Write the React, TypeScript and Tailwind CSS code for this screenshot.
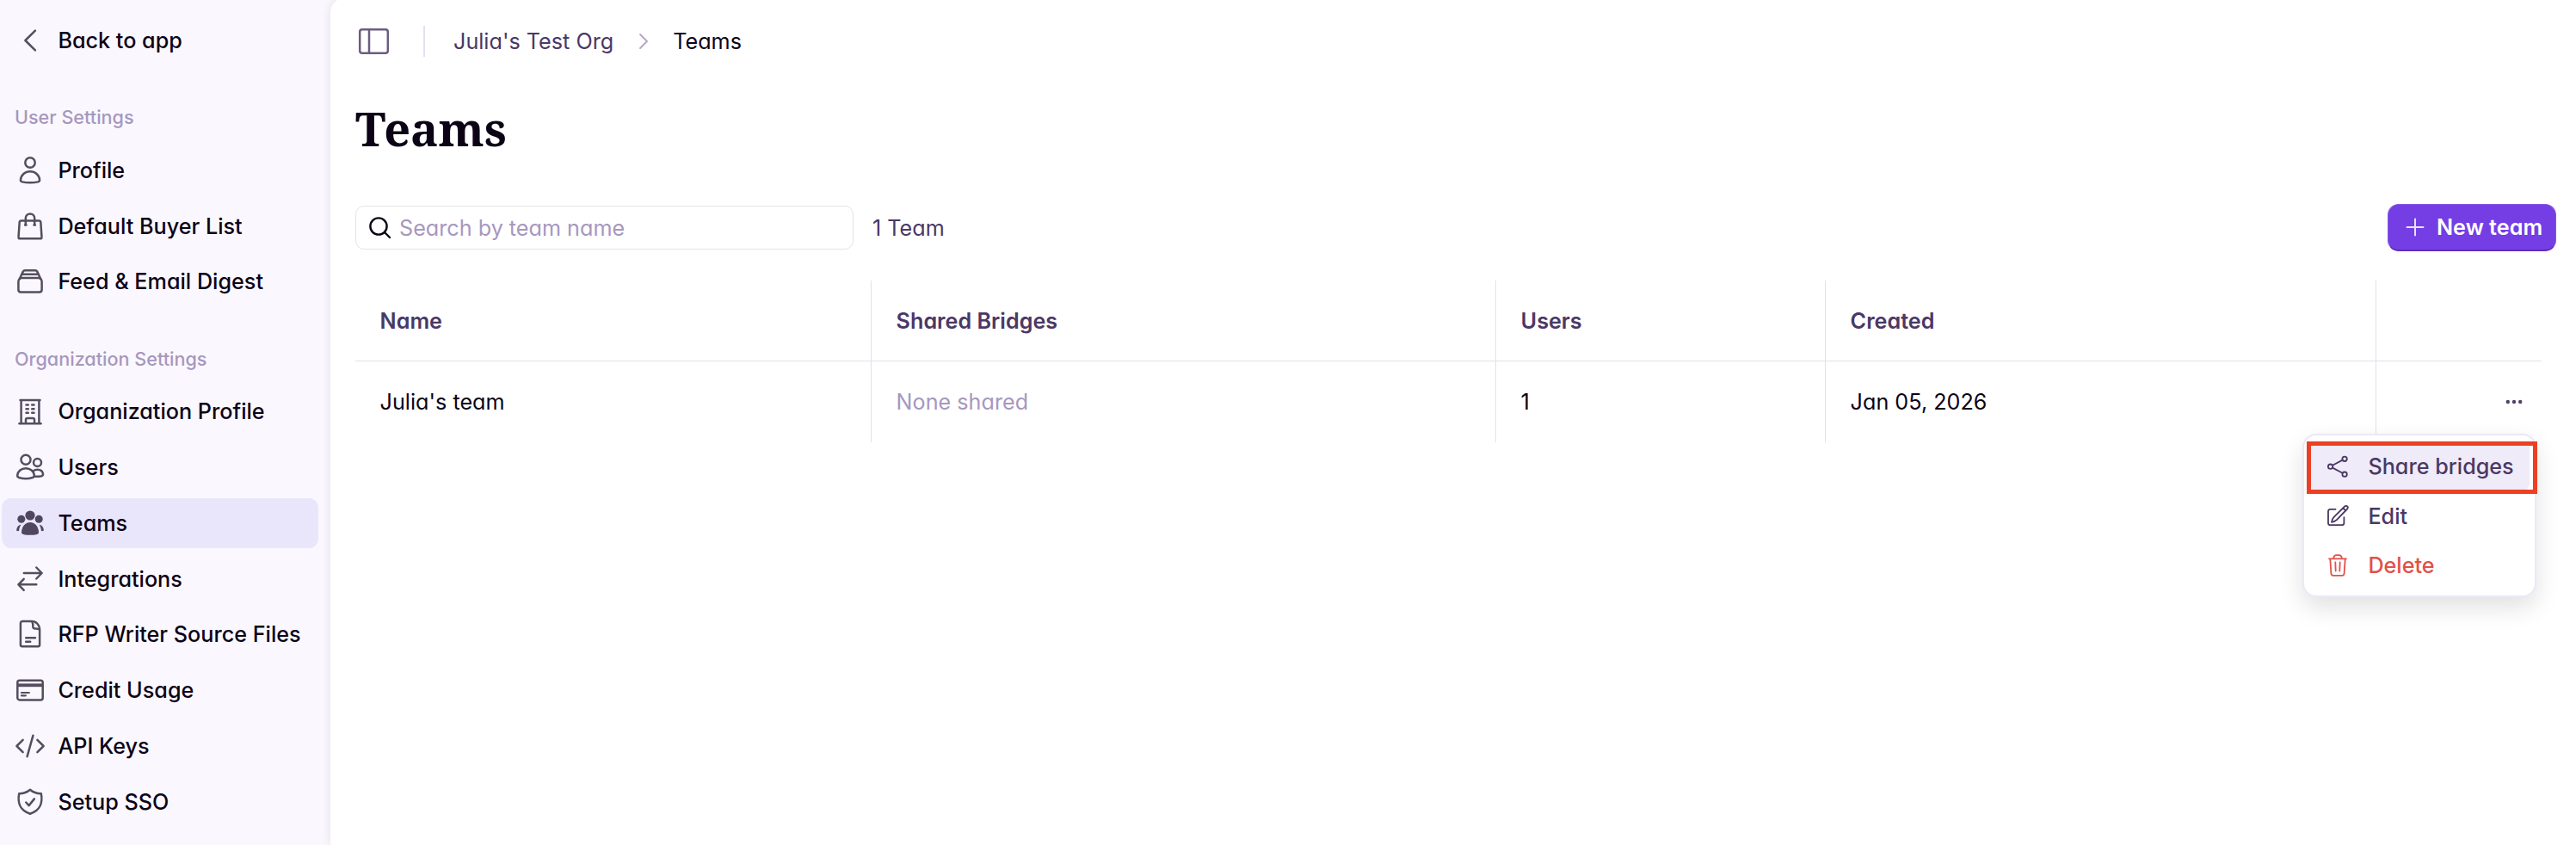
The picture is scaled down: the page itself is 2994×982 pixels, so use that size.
import React from "react";

type Glyph = React.ReactNode;

function Icon({ children, color = "#544e60", width = 2.5 }: { children: Glyph; color?: string; width?: number }) {
  return (
    <svg
      width="40"
      height="40"
      viewBox="0 0 40 40"
      fill="none"
      stroke={color}
      strokeWidth={width}
      strokeLinecap="round"
      strokeLinejoin="round"
      className="shrink-0"
    >
      {children}
    </svg>
  );
}

const glyphs: Record<string, Glyph> = {
  back: <path d="M25.9 8.600 14.4 20l11.5 11.400" />,
  profile: (
    <>
      <circle cx="20" cy="11" r="5.700" />
      <path d="M8.900 31C9.500 25.300 14 21.200 20 21.200S30.500 25.300 31.100 31c.2 1.400-.6 2-2 2.400-2.600.6-5.800.9-9.100.9s-6.500-.3-9.100-.9c-1.400-.4-2.200-1-2-2.400z" />
    </>
  ),
  bag: (
    <>
      <path d="M9.300 13.500h21.400c.9 0 1.500.6 1.600 1.500l1.200 17.700c.1.900-.5 1.600-1.400 1.600H7.900c-.9 0-1.500-.7-1.400-1.600L7.700 15c.1-.9.700-1.500 1.600-1.500z" />
      <path d="M14.800 18.200v-7.600a5.200 5.200 0 0 1 10.400 0v7.600M14.100 18.400h1.400M24.500 18.400h1.400" />
    </>
  ),
  stack: (
    <>
      <path d="M10.500 16h19c2.400 0 4.100 2 4.100 4.400v9.400c0 1.700-1.200 2.700-2.800 2.700H9.200c-1.600 0-2.800-1-2.800-2.700v-9.400C6.400 18 8.100 16 10.500 16z" />
      <path d="M7.600 17.500l4-8.600c.6-1.200 1.200-1.700 2.400-1.700h12c1.200 0 1.800.5 2.400 1.700l4 8.600M10.800 11.700h18.400" />
    </>
  ),
  building: (
    <>
      <path d="M7.400 34.300h25.200M8.500 7h23M9.600 7v27M30.400 7v27M15 34v-4.200c0-1.100.8-1.800 1.800-1.800h6.400c1 0 1.800.7 1.800 1.800V34" />
      <path d="M15.500 12.600h2.300M22.200 12.600h2.300M15.500 17.200h2.300M22.200 17.200h2.300M15.500 21.700h2.300M22.200 21.700h2.300" />
    </>
  ),
  users: (
    <>
      <circle cx="15" cy="11.300" r="5.500" />
      <circle cx="28.500" cy="14.500" r="4.500" />
      <path d="M5.200 29.500c.5-4.800 4.500-8.300 9.800-8.300s9.300 3.500 9.800 8.300c.1 1.300-.6 2-1.900 2.500-4.700 1.500-11.100 1.500-15.800 0-1.300-.5-2-1.200-1.900-2.500z" />
      <path d="M23.500 24.500c1.500-1.300 3.200-1.800 5-1.800 3.700 0 6.100 2.300 6.500 5.300.2 1.300-.5 1.900-1.700 2.200-2.700.6-5.600.8-8.300.5" />
    </>
  ),
  teams: (
    <g fill="#51465f" stroke="none">
      <circle cx="20" cy="11" r="5.600" />
      <circle cx="9.800" cy="15.200" r="4.500" />
      <circle cx="30.200" cy="15.200" r="4.500" />
      <path d="M10 31c0-6.500 4.200-12 10-12s10 5.500 10 12c0 2-4.200 2.800-10 2.800S10 33 10 31z" />
      <path d="M4.200 28.300c0-3.200 1.700-5.800 5.200-6.500-1.500 2.200-2.200 4.400-2.300 7.300-1.800.2-2.900.1-2.900-.8zM35.800 28.300c0-3.200-1.700-5.800-5.200-6.500 1.500 2.200 2.200 4.400 2.300 7.300 1.800.2 2.900.1 2.900-.8z" />
    </g>
  ),
  swap: <path d="M12.800 13h20.800M27.300 6.500l6.300 6.500-6.300 6.500M27.300 26.300H6.400M12.700 19.800l-6.300 6.500 6.300 6.500" />,
  file: (
    <>
      <path d="M11.200 5.100h10.300C27.500 5.100 31.100 9.400 31.100 15.300v17c0 1.200-.8 2-2 2H10.900c-1.200 0-2-.8-2-2V7.300c0-1.300 1-2.200 2.300-2.200z" />
      <path d="M22.300 5.600c1 1.500 1.200 3.300 1 5.500-.1 1.600.8 2.400 2.300 2.400 2.200-.1 4 0 5.300 1.200M15.200 24.300h10.800M15.200 28.700h5" />
    </>
  ),
  card: (
    <>
      <rect x="5.300" y="8.700" width="29.400" height="22.700" rx="2.500" />
      <path d="M5.200 14.300h29.600" strokeWidth="3.800" strokeLinecap="butt" />
      <path d="M9.900 23h8.900M9.900 26.300h5" strokeWidth="2.200" />
    </>
  ),
  code: <path d="M11.600 12.800 4.400 20l7.200 7.200M28.400 12.800l7.200 7.200-7.200 7.200M23.400 7.800 16.600 32.200" />,
  shield: (
    <>
      <path d="M20 5.700c3.300 2.900 8 4.400 12.800 4.600 2 10.300-1 19.700-12.800 23.400C8.200 30 5.200 20.600 7.200 10.300 12 10.100 16.700 8.600 20 5.700z" />
      <path d="M15.300 20.500l3.300 3.600 6.300-7.700" />
    </>
  ),
};

function NavItem({ icon, label, active = false }: { icon: string; label: string; active?: boolean }) {
  return (
    <a
      className={
        active
          ? "flex h-[57.6px] items-center gap-[12.400px] rounded-[11px] bg-[#e9e6fc] pl-[13px]"
          : "flex h-[57.6px] items-center gap-[12.400px] rounded-[11px] pl-[13px]"
      }
    >
      <Icon>{glyphs[icon]}</Icon>
      <span>{label}</span>
    </a>
  );
}

function NavLabel({ children }: { children: string }) {
  return <div className="mt-[40.8px] flex h-[40px] items-center pl-[15px] text-[21.6px] text-[#a797be]">{children}</div>;
}

const userItems = [
  ["profile", "Profile"],
  ["bag", "Default Buyer List"],
  ["stack", "Feed & Email Digest"],
];

const orgItems = [
  ["building", "Organization Profile"],
  ["users", "Users"],
  ["teams", "Teams"],
  ["swap", "Integrations"],
  ["file", "RFP Writer Source Files"],
  ["card", "Credit Usage"],
  ["code", "API Keys"],
  ["shield", "Setup SSO"],
];

function Sidebar() {
  return (
    <nav className="flex w-[384px] shrink-0 flex-col pt-[18px] pr-[14px] pl-[2px] font-medium whitespace-nowrap text-[#0d0317]">
      <NavItem icon="back" label="Back to app" />
      <NavLabel>User Settings</NavLabel>
      <div className="mt-[12.6px] flex flex-col gap-[7.2px]">
        {userItems.map(([icon, label]) => (
          <NavItem key={label} icon={icon} label={label} />
        ))}
      </div>
      <NavLabel>Organization Settings</NavLabel>
      <div className="mt-[12.6px] flex flex-col gap-[7.2px]">
        {orgItems.map(([icon, label]) => (
          <NavItem key={label} icon={icon} label={label} active={label === "Teams"} />
        ))}
      </div>
    </nav>
  );
}

function Header() {
  return (
    <header className="flex h-[96px] items-center pl-[29px]">
      <Icon color="#6c5d80">
        <rect x="5.200" y="6.200" width="32.600" height="27.600" rx="2.800" />
        <path d="M16 6.500v27" />
      </Icon>
      <div className="ml-[39px] h-[36px] w-[2px] bg-[#e5dff0]" />
      <span className="ml-[33px] text-[#4b3865]">Julia's Test Org</span>
      <svg
        width="12"
        height="20"
        viewBox="0 0 12 20"
        fill="none"
        stroke="#b3a4ca"
        strokeWidth="1.800"
        strokeLinecap="round"
        strokeLinejoin="round"
        className="ml-[29px]"
      >
        <path d="M2 2l8 8-8 8" />
      </svg>
      <span className="ml-[28px] text-[#0d0317]">Teams</span>
    </header>
  );
}

function Toolbar() {
  return (
    <div className="mt-[51px] flex h-[55px] items-center">
      <label className="flex h-[51px] w-[579px] items-center rounded-[10px] border border-[#e4e4e6] pl-[14px]">
        <svg
          width="28"
          height="28"
          viewBox="0 0 28 28"
          fill="none"
          stroke="#0d0317"
          strokeWidth="2.400"
          strokeLinecap="round"
          className="shrink-0"
        >
          <circle cx="12" cy="12" r="9.600" />
          <path d="M19 19l6 6" />
        </svg>
        <span className="ml-[8px] text-[#a797be]">Search by team name</span>
      </label>
      <span className="ml-[22px] text-[#4b3865]">1 Team</span>
      <button className="ml-auto flex h-[55px] w-[196px] items-center rounded-[13px] border border-b-2 border-[#8656e8] border-b-[#5c2fb8] bg-[#743ee4] pl-[19px] font-semibold whitespace-nowrap text-white">
        <svg width="24" height="24" viewBox="0 0 24 24" stroke="#e9dffb" strokeWidth="2" strokeLinecap="round" className="shrink-0">
          <path d="M12 2.500v19M2.500 12h19" />
        </svg>
        <span className="ml-[13px]">New team</span>
      </button>
    </div>
  );
}

const headings = ["Name", "Shared Bridges", "Users", "Created", ""];

function TeamsTable() {
  return (
    <div className="mt-[34px] w-[2541px]">
      <div className="grid h-[94px] grid-cols-[600px_726px_383px_640px_192px] border-b border-[#e3e0ea] font-semibold text-[#4b3865]">
        {headings.map((h, i) => (
          <div key={i} className="flex items-center border-r border-[#e3e0ea] pl-[28.600px] last:border-r-0">
            {h}
          </div>
        ))}
      </div>
      <div className="grid h-[94px] grid-cols-[600px_726px_383px_640px_192px] text-[#0d0317]">
        <div className="flex items-center border-r border-[#e3e0ea] pl-[28.600px]">Julia's team</div>
        <div className="flex items-center border-r border-[#e3e0ea] pl-[28.600px] text-[#a797be]">None shared</div>
        <div className="flex items-center border-r border-[#e3e0ea] pl-[28.600px]">1</div>
        <div className="flex items-center border-r border-[#e3e0ea] pl-[28.600px]">Jan 05, 2026</div>
        <div className="flex items-center justify-end pr-[20px]">
          <svg width="24" height="8" viewBox="0 0 24 8" fill="#51406a">
            <circle cx="4.800" cy="4" r="2.200" />
            <circle cx="12" cy="4" r="2.200" />
            <circle cx="19.200" cy="4" r="2.200" />
          </svg>
        </div>
      </div>
    </div>
  );
}

function RowMenu() {
  return (
    <div className="absolute top-[504px] left-[2676px] h-[190px] w-[272px] rounded-[16px] border-2 border-[#ebe8f6] bg-white pt-[7.500px] pr-[6px] pl-[6px] font-medium whitespace-nowrap text-[#4b3865] shadow-[0_12px_28px_rgba(0,0,0,0.12)]">
      <div className="flex h-[57px] items-center rounded-[9px] bg-[#efebf8] pl-[13px]">
        <Icon color="#4b3865" width={1.8}>
          <circle cx="11.600" cy="20.200" r="2.700" />
          <circle cx="28.100" cy="11.300" r="2.700" />
          <circle cx="28.100" cy="29.200" r="2.700" />
          <path d="M14.100 18.800l11.500-6.200M14.100 21.600l11.500 6.200" />
        </Icon>
        <span className="ml-[15.400px]">Share bridges</span>
      </div>
      <div className="flex h-[58px] items-center pl-[13px]">
        <Icon color="#4b3865" width={1.8}>
          <path d="M17.500 11.800h-6c-1.500 0-2.500 1-2.500 2.500v13.400c0 1.500 1 2.500 2.500 2.500h13.400c1.500 0 2.500-1 2.500-2.500v-6.500" />
          <path d="M13 26.800c.3-2.300 1-4.300 2.600-6L28.200 8.500c1-.9 2.200-.9 3 0 .8.8.8 2-.1 3L18.900 24.100c-1.600 1.600-3.600 2.400-5.900 2.700zM26.200 10.500l3 3" />
        </Icon>
        <span className="ml-[15.400px]">Edit</span>
      </div>
      <div className="flex h-[57px] items-center pl-[13px] text-[#e2504a]">
        <Icon color="#e2504a" width={1.8}>
          <path d="M10 12.300h20M11.300 12.500l1.100 17c.1 1.500 1 2.300 2.400 2.300h10.400c1.400 0 2.300-.8 2.400-2.300l1.100-17M15.200 12c.2-2.700 1.600-3.800 3.500-3.800h2.600c1.900 0 3.300 1.100 3.500 3.800M17.300 16.500l.4 10M22.700 16.500l-.4 10" />
        </Icon>
        <span className="ml-[15.400px]">Delete</span>
      </div>
      <div className="absolute top-[7px] left-[3px] h-[61px] w-[268px] border-[5px] border-[#eb4024]" />
    </div>
  );
}

export default function App() {
  return (
    <div className="relative flex h-[982px] w-[2994px] overflow-hidden bg-[#faf8fe] font-['Inter',sans-serif] text-[25.2px] leading-[36px] [font-feature-settings:'cv11']">
      <Sidebar />
      <main className="-mt-[3px] flex flex-1 flex-col rounded-tl-[18px] bg-white pt-[3px] shadow-[0_0_12px_rgba(30,10,60,0.10)]">
        <Header />
        <div className="flex flex-col pr-[23px] pl-[29px]">
          <h1 className="mt-[17px] h-[73px] font-['Noto_Serif','Droid_Serif','DejaVu_Serif',serif] text-[54px] leading-[72px] font-bold text-[#0d0317]">
            Teams
          </h1>
          <Toolbar />
          <TeamsTable />
        </div>
      </main>
      <RowMenu />
    </div>
  );
}
